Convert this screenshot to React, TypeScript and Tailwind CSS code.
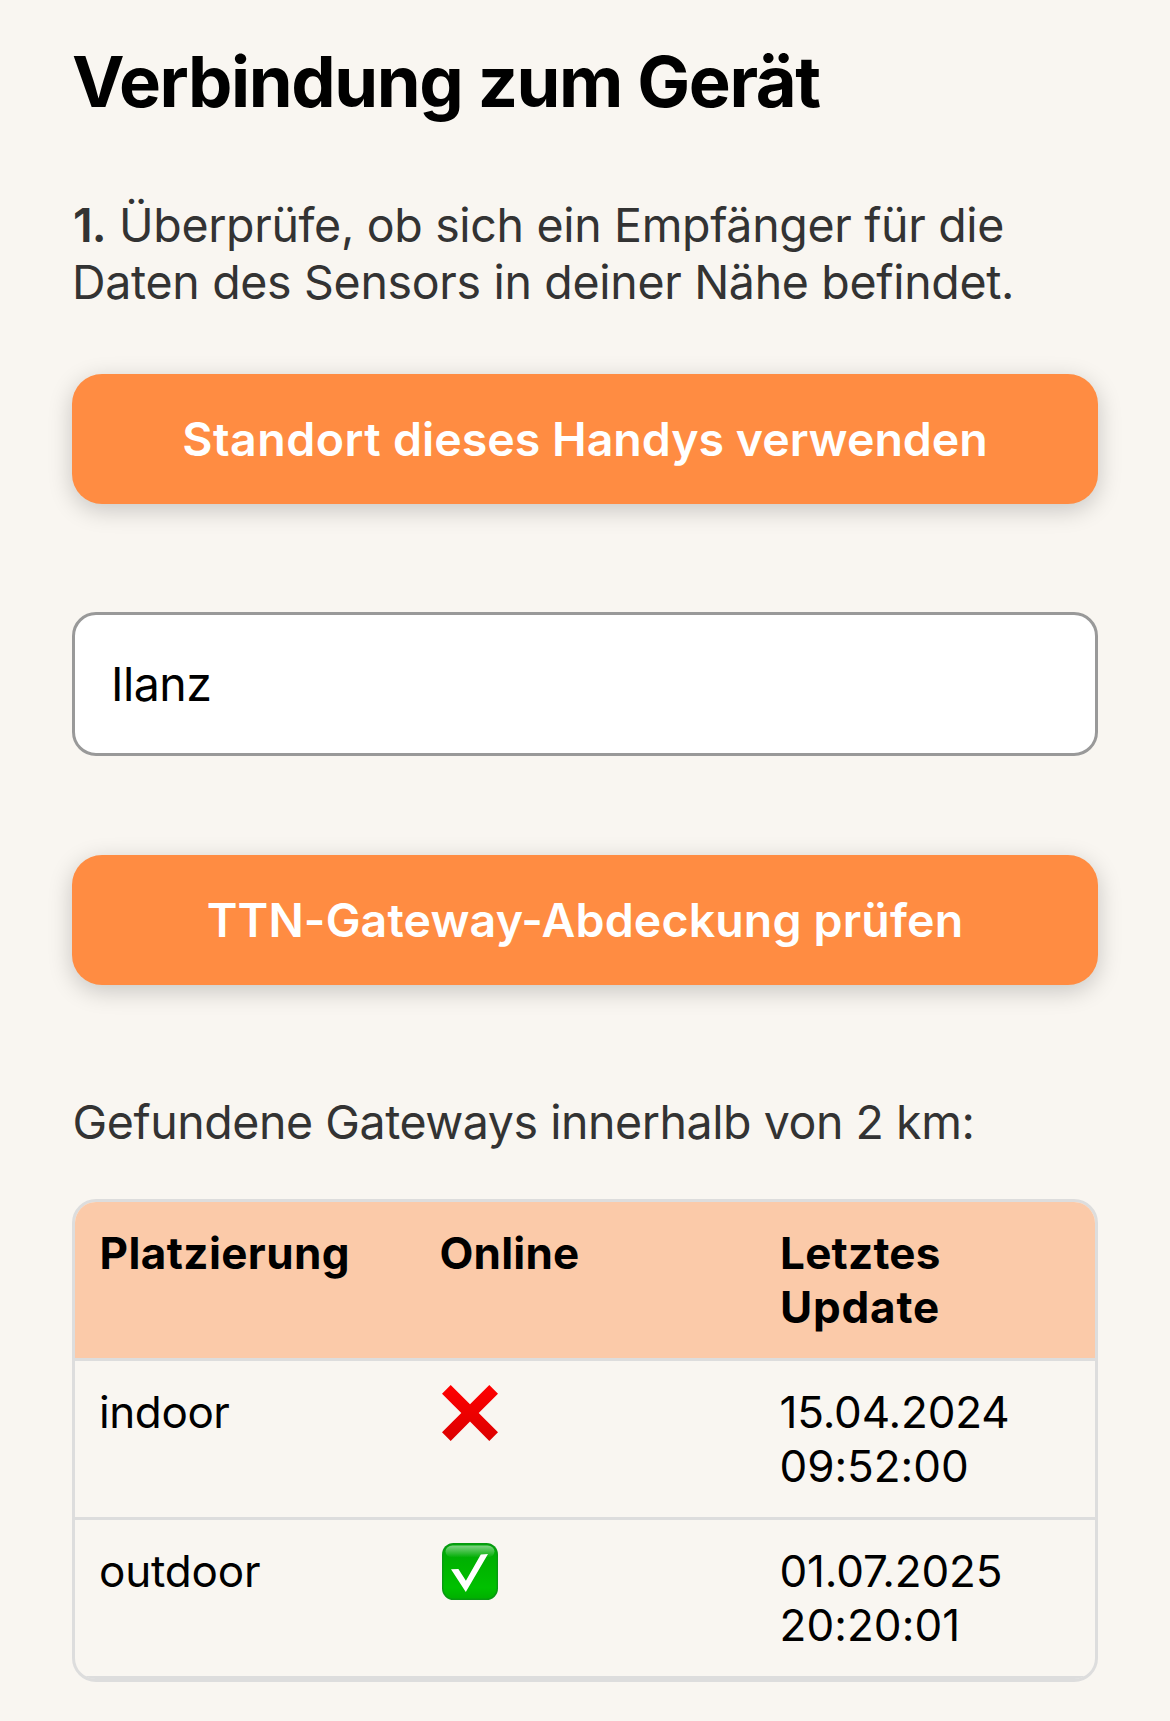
type Gateway = {
  placement: string;
  placementClass: string;
  online: boolean;
  date: string;
  dateClass: string;
  time: string;
  timeClass: string;
};

const gateways: Gateway[] = [
  {
    placement: "indoor",
    placementClass: "tracking-[-0.4px]",
    online: false,
    date: "15.04.2024",
    dateClass: "tracking-[-0.15px]",
    time: "09:52:00",
    timeClass: "tracking-[-0.05px]",
  },
  {
    placement: "outdoor",
    placementClass: "tracking-[-0.18px]",
    online: true,
    date: "01.07.2025",
    dateClass: "tracking-[-0.16px]",
    time: "20:20:01",
    timeClass: "tracking-[0.06px]",
  },
];

function CrossIcon() {
  return (
    <svg viewBox="0 0 56 56" className="ml-[3px] h-14 w-14" aria-label="offline">
      <defs>
        <linearGradient id="cross" x1="0" y1="0" x2="0" y2="1">
          <stop offset="0" stopColor="#ff0000" />
          <stop offset="1" stopColor="#dc0000" />
        </linearGradient>
      </defs>
      <path
        fill="url(#cross)"
        d="M8.7 0 28 19.3 47.3 0 56 8.7 36.7 28 56 47.2 47.3 55.9 28 36.5 8.7 55.9 0 47.2 19.3 28 0 8.7Z"
      />
    </svg>
  );
}

function CheckIcon() {
  return (
    <svg viewBox="0 0 56 57" className="-mt-px ml-[3px] h-[57px] w-14" aria-label="online">
      <defs>
        <linearGradient id="check-body" x1="0" y1="0" x2="0" y2="1">
          <stop offset="0" stopColor="#00a808" />
          <stop offset="0.4" stopColor="#00b400" />
          <stop offset="0.8" stopColor="#00c000" />
          <stop offset="1" stopColor="#00b000" />
        </linearGradient>
        <linearGradient id="check-gloss" x1="0" y1="0" x2="0" y2="1">
          <stop offset="0" stopColor="#ffffff" stopOpacity="0.5" />
          <stop offset="1" stopColor="#ffffff" stopOpacity="0" />
        </linearGradient>
      </defs>
      <rect x="0" y="0" width="56" height="57" rx="11.5" fill="#079a10" />
      <rect x="1.4" y="1.4" width="53.2" height="54.2" rx="10.4" fill="url(#check-body)" />
      <rect x="3.5" y="2.6" width="49" height="12" rx="7" fill="url(#check-gloss)" />
      <path fill="#ffffff" d="M9 26.3 16.4 26 23.9 37.7 38.8 11.5 46 11 23.8 48.9Z" />
    </svg>
  );
}

const buttonClass =
  "block h-[130px] w-full rounded-[30px] bg-[#ff8c42] pt-0.5 text-center text-[46.5px] font-semibold whitespace-nowrap text-white shadow-[0_6px_24px_rgba(0,0,0,0.2)]";

export default function App() {
  return (
    <main className="h-[1721px] w-[1170px] overflow-hidden bg-[#f9f6f1] px-[72px] pt-10 font-['Inter',sans-serif] text-black">
      <h1 className="text-[70.5px] leading-[84px] font-bold tracking-[-1.4px] whitespace-nowrap">
        Verbindung zum Gerät
      </h1>

      <p className="mt-[73px] text-[46.5px] leading-[57px] whitespace-nowrap text-[#333]">
        <span className="inline-block w-[47px] pl-px font-semibold tracking-[-1px]">1.</span>
        <span className="tracking-[-0.33px]">Überprüfe, ob sich ein Empfänger für die</span>
        <br />
        <span className="tracking-[-0.32px]">Daten des Sensors in deiner Nähe befindet.</span>
      </p>

      <button className={`mt-[63px] ${buttonClass} tracking-[0px]`}>
        <span className="tracking-[0.5px]">Standort</span> dieses Handys verwenden
      </button>

      <input
        type="text"
        defaultValue="Ilanz"
        className="mt-[108px] block h-36 w-full rounded-[24px] border-[3px] border-[#999] bg-white px-9 text-[46.5px] tracking-[-0.5px] outline-none"
      />

      <button className={`mt-[99px] ${buttonClass} tracking-[0.14px]`}>
        TTN-Gateway-Abdeckung prüfen
      </button>

      <p className="mt-[109px] pl-[0.5px] text-[46.5px] leading-[57px] tracking-[-0.45px] whitespace-nowrap text-[#333]">
        Gefundene Gateways innerhalb von 2 km:
      </p>

      <section className="mt-12 overflow-hidden rounded-[24px] border-[3px] border-[#ddd] text-[44px] leading-[54px]">
        <div className="grid grid-cols-3 border-b-[3px] border-[#ddd] bg-[#fbcaa9] font-bold">
          <div className="p-6 pl-[24.5px] tracking-[0.42px]">Platzierung</div>
          <div className="p-6 pl-[24.5px] tracking-[0.2px]">Online</div>
          <div className="p-6 pl-[25px]">
            <div className="tracking-[0.25px]">Letztes</div>
            <div className="tracking-[0.8px]">Update</div>
          </div>
        </div>
        {gateways.map((g) => (
          <div key={g.placement} className="grid grid-cols-3 border-b-[3px] border-[#ddd]">
            <div className={`p-6 ${g.placementClass}`}>{g.placement}</div>
            <div className="p-6">{g.online ? <CheckIcon /> : <CrossIcon />}</div>
            <div className="p-6 pl-[24.5px] whitespace-nowrap">
              <div className={g.dateClass}>{g.date}</div>
              <div className={g.timeClass}>{g.time}</div>
            </div>
          </div>
        ))}
      </section>
    </main>
  );
}
